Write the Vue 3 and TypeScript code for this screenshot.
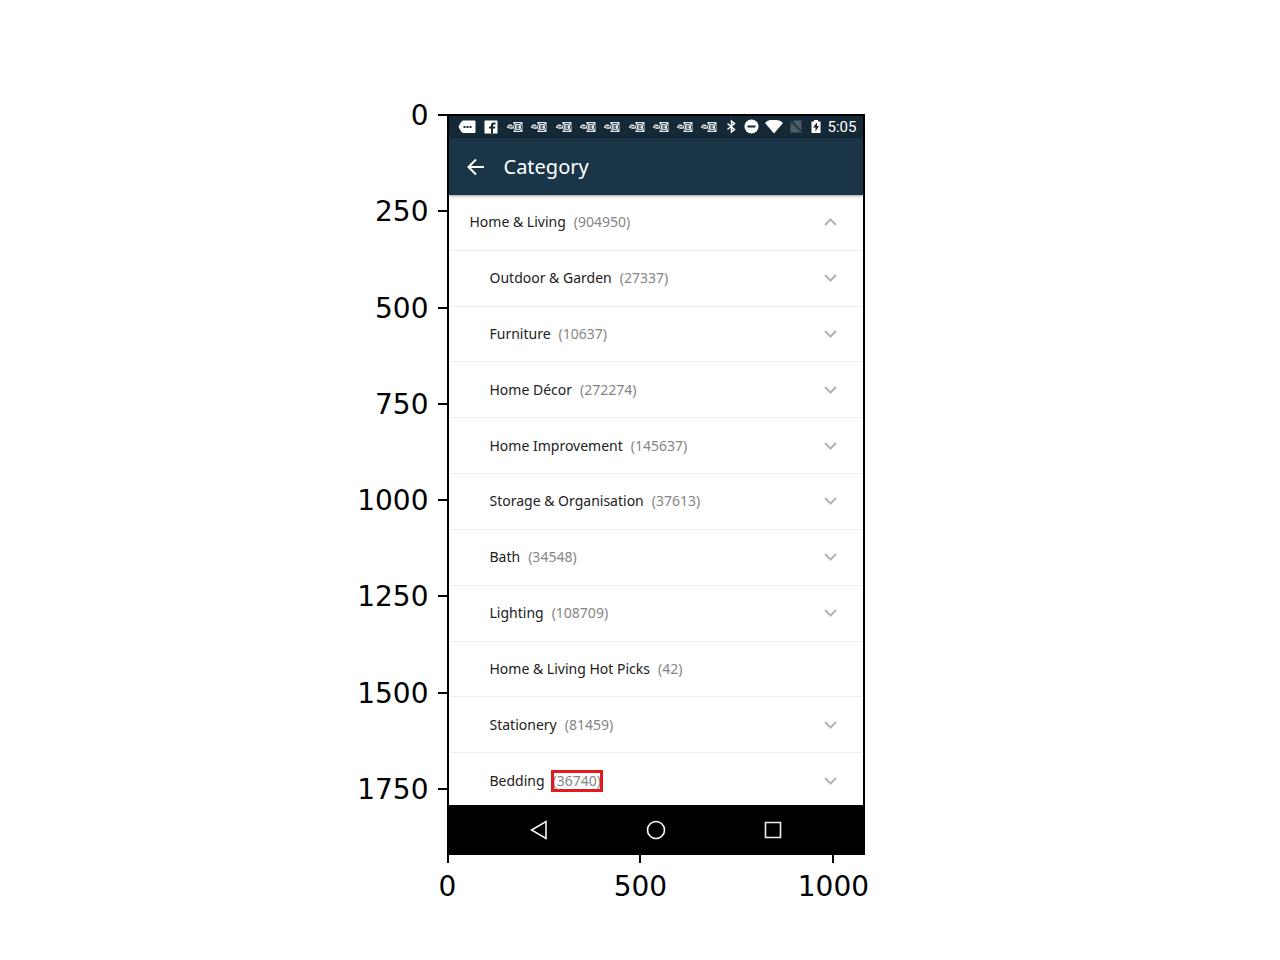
<script setup lang="ts">
interface Category {
  name: string
  count: number
  state: 'open' | 'closed' | 'leaf'
  nested: boolean
  marked?: boolean
}

const yTicks: number[] = [0, 250, 500, 750, 1000, 1250, 1500, 1750]
const xTicks: number[] = [0, 500, 1000]

const categories: Category[] = [
  { name: 'Home & Living', count: 904950, state: 'open', nested: false },
  { name: 'Outdoor & Garden', count: 27337, state: 'closed', nested: true },
  { name: 'Furniture', count: 10637, state: 'closed', nested: true },
  { name: 'Home Décor', count: 272274, state: 'closed', nested: true },
  { name: 'Home Improvement', count: 145637, state: 'closed', nested: true },
  { name: 'Storage & Organisation', count: 37613, state: 'closed', nested: true },
  { name: 'Bath', count: 34548, state: 'closed', nested: true },
  { name: 'Lighting', count: 108709, state: 'closed', nested: true },
  { name: 'Home & Living Hot Picks', count: 42, state: 'leaf', nested: true },
  { name: 'Stationery', count: 81459, state: 'closed', nested: true },
  { name: 'Bedding', count: 36740, state: 'closed', nested: true, marked: true },
]
</script>

<template>
  <main class="figure">
    <div class="y-axis">
      <div v-for="t in yTicks" :key="t" class="y-tick"><span>{{ t }}</span></div>
    </div>

    <section class="phone">
      <div class="status">
        <div class="notifications">
          <svg width="18" height="14" viewBox="0 0 18 14">
            <path d="M5 .5h11.500q1 0 1 1v10.500q0 1-1 1H5Q3.500 13 .5 6.800 3.500.5 5 .5z" fill="#fff" />
            <path d="M5.500 6h2v2h-2zM8.500 6h2v2h-2zM11.500 6h2v2h-2z" fill="#152835" />
          </svg>
          <svg width="14" height="14" viewBox="0 0 14 14">
            <rect x=".5" y=".5" width="13" height="13" rx=".5" fill="#fff" />
            <path d="M7 13.500V8.500H5V6.500h2V5q0-2.500 2.500-2.500h2v2H10q-1 0-1 1v1h2.300L11 8.500H9v5z" fill="#152835" />
          </svg>
          <svg v-for="n in 9" :key="n" width="16" height="12" viewBox="0 0 16 12">
            <path d="M0 5.500L2 3.500h2.500L6 5v2.500L4 8 0 6.800zM6 1h9.500v10H6l1.500-2L5.500 6.500 7 3.500z" fill="#e3e7ea" />
            <path d="M1.500 5.800H6" stroke="#152835" stroke-width="1" />
            <path d="M9 2.500H13l1.500 2v3L13 9.500H9L7.500 7.500v-3zM12.300 4.500H10v3h2.300M10 6h2" fill="none" stroke="#263945" stroke-width=".9" />
          </svg>
        </div>
        <div class="system">
          <svg width="20" height="16" viewBox="0 0 20 16">
            <path d="M5.500 4.500l7 6L9.500 13V2l3 2.500-7 6" fill="none" stroke="#fff" stroke-width="1.500" />
          </svg>
          <svg width="20" height="16" viewBox="0 0 20 16">
            <circle cx="9.500" cy="7.500" r="7" fill="#fff" />
            <path d="M5.500 6.500h8v2h-8z" fill="#152835" />
          </svg>
          <svg width="24" height="16" viewBox="0 0 24 16">
            <path d="M3 4Q5 1.300 8 1h7q4 .3 6 3L12 14.500z" fill="#fff" />
          </svg>
          <svg width="20" height="16" viewBox="0 0 20 16">
            <path d="M5 4l9.500 9.500H4.500V4.500zM8 1.500h7.500v10L7 2.500z" fill="#4f5e68" />
            <path d="M4 2l12 12" stroke="#4f5e68" />
          </svg>
          <svg width="20" height="16" viewBox="0 0 20 16">
            <path d="M5.500 2.500H8V1h4v1.500h2.500V14h-9z" fill="#fff" />
            <path d="M11 3.500L7 8.500h2.500v4l3.500-5.500H11z" fill="#152835" />
          </svg>
          <time>5:05</time>
        </div>
      </div>

      <header class="app-bar">
        <button type="button" class="back" aria-label="Back">
          <svg width="18" height="18" viewBox="0 0 18 18">
            <path d="M17 9H2M9 1.500L1.500 9 9 16.500" fill="none" stroke="#fff" stroke-width="2" />
          </svg>
        </button>
        <h1>Category</h1>
      </header>

      <div class="viewport">
        <ul class="list">
          <li v-for="c in categories" :key="c.name">
            <button type="button" class="row" :class="{ nested: c.nested }">
              <span class="name">{{ c.name }}</span>
              <span class="count" :class="{ marked: c.marked }">({{ c.count }})</span>
              <svg v-if="c.state !== 'leaf'" class="chevron" width="14" height="10" viewBox="0 0 14 10">
                <path :d="c.state === 'open' ? 'M2 8l5.500-5.500L13 8' : 'M2 2l5.500 5.500L13 2'" fill="none" stroke="#b3b3b3" stroke-width="2" />
              </svg>
            </button>
          </li>
        </ul>
      </div>

      <nav class="nav">
        <button type="button" aria-label="Back">
          <svg width="20" height="20" viewBox="0 0 20 20">
            <path d="M17 1.500v17L2.500 10z" fill="none" stroke="#fff" stroke-width="1.500" />
          </svg>
        </button>
        <button type="button" aria-label="Home">
          <svg width="20" height="20" viewBox="0 0 20 20">
            <circle cx="10" cy="10" r="8.500" fill="none" stroke="#fff" stroke-width="1.600" />
          </svg>
        </button>
        <button type="button" aria-label="Recent apps">
          <svg width="20" height="20" viewBox="0 0 20 20">
            <path d="M2.500 2.500h15v15h-15z" fill="none" stroke="#eee" stroke-width="1.600" />
          </svg>
        </button>
      </nav>
    </section>

    <div class="x-axis">
      <div v-for="t in xTicks" :key="t" class="x-tick">{{ t }}</div>
    </div>
  </main>
</template>

<style>
body {
  margin: 0;
  background: #fff;
}
</style>

<style scoped>
.figure {
  display: grid;
  grid-template-columns: 447fr 418fr 415fr;
  padding: 114px 0 56px;
  color: #000;
  font-family: "DejaVu Sans", sans-serif;
  font-size: 28px;
  line-height: 28px;
}

.y-axis {
  display: flex;
  flex-direction: column;
  justify-content: space-between;
  margin: -14px 0 51px;
}

.y-tick {
  display: flex;
  align-items: center;
  justify-content: flex-end;
  gap: 9px;
}

.y-tick span {
  padding-top: 2px;
}

.y-tick::after {
  content: "";
  width: 9px;
  height: 2px;
  background: #000;
}

.x-axis {
  grid-column: 2;
  display: flex;
  justify-content: space-between;
  margin: 0 -8px 0 -39px;
}

.x-tick {
  display: flex;
  flex-direction: column;
  align-items: center;
  gap: 10px;
  width: 80px;
}

.x-tick::before {
  content: "";
  width: 2px;
  height: 8px;
  background: #000;
}

.phone {
  border: 2px solid #000;
  font-family: "Noto Sans", sans-serif;
  font-size: 14px;
  line-height: 20px;
}

.status {
  display: flex;
  align-items: center;
  justify-content: space-between;
  height: 22px;
  padding: 0 7px 0 6px;
  background: #152835;
}

.notifications {
  display: grid;
  grid-template-columns: repeat(11, 1fr);
  width: 267px;
  justify-items: center;
  align-items: center;
}

.system {
  display: flex;
  align-items: center;
}

.system time {
  margin-left: 2px;
  color: #fff;
  font-family: Roboto, sans-serif;
  font-size: 15px;
}

.app-bar {
  position: relative;
  display: flex;
  align-items: center;
  gap: 19px;
  height: 57px;
  padding: 0 18px;
  background: #1a3547;
  box-shadow: 0 1px 3px rgba(0, 0, 0, 0.4);
}

button {
  display: flex;
  align-items: center;
  padding: 0;
  border: 0;
  background: none;
  color: inherit;
  font: inherit;
}

h1 {
  margin: 0;
  color: #fff;
  font-size: 20px;
  font-weight: 400;
  line-height: 28px;
}

.viewport {
  height: 610px;
  overflow: hidden;
}

.list {
  display: grid;
  grid-template-rows: repeat(11, 1fr);
  height: 614px;
  margin: 0;
  padding: 0;
  list-style: none;
}

.list li {
  display: flex;
  border-bottom: 1px solid #eee;
}

.row {
  flex: 1;
  gap: 8px;
  padding: 0 26px 0 21px;
}

.row.nested {
  padding-left: 41px;
}

.name {
  color: #212121;
}

.count {
  position: relative;
  color: #858585;
}

.marked::after {
  content: "";
  position: absolute;
  inset: -1px -2px;
  border: 3px solid #e3191c;
}

.chevron {
  margin-left: auto;
}

.nav {
  display: flex;
  justify-content: center;
  gap: 97px;
  height: 48px;
  padding-top: 1px;
  box-sizing: border-box;
  background: #000;
}
</style>
